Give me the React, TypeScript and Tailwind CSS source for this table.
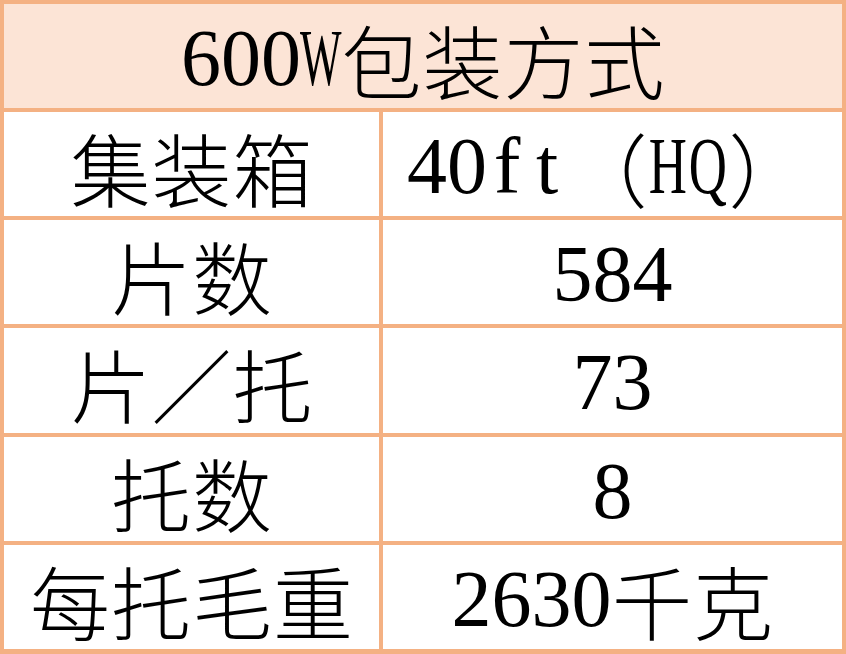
const half: Record<string, string> = {
  W: 'scale-x-[0.55]',
  H: 'scale-x-[0.66]',
  Q: 'scale-x-[0.66]',
};

// SimSun-like half-width Latin: every ASCII char sits in a 40px box
function Mixed({ text }: { text: string }) {
  return (
    <span className="inline-flex items-center">
      {text.split('').map((ch, i) =>
        ch.charCodeAt(0) < 128 ? (
          <span key={i} className="inline-flex justify-center w-[40px]">
            <span className={`inline-block shrink-0 ${half[ch] ?? ''}`}>{ch}</span>
          </span>
        ) : (
          <span key={i} className="inline-flex justify-center w-[81px] font-['Noto_Sans_CJK_SC',sans-serif] font-light">
            {ch}
          </span>
        ),
      )}
    </span>
  );
}

const rows: { label: string; value: string; left?: boolean }[] = [
  { label: '集装箱', value: '40ft（HQ）', left: true },
  { label: '片数', value: '584' },
  { label: '片／托', value: '73' },
  { label: '托数', value: '8' },
  { label: '每托毛重', value: '2630千克' },
];

export default function App() {
  return (
    <div className="w-[846px] h-[654px] bg-[#f4b183] pt-[4px] pb-[5px] px-[4px] grid grid-cols-[375px_459px] grid-rows-[104px_104px_104px_105px_104px_104px] gap-[4px] font-['Liberation_Serif','Noto_Sans_CJK_SC',serif] text-[80px] leading-none text-black">
      <div className="col-span-2 bg-[#fce4d6] flex items-center justify-center pt-[4px]">
        <Mixed text="600W包装方式" />
      </div>
      {rows.map((r) => (
        <div key={r.label} className="contents">
          <div className="bg-white flex items-center justify-center pt-[3px]">
            <Mixed text={r.label} />
          </div>
          <div
            className={`bg-white flex items-center pt-[3px] ${
              r.left ? 'justify-start pl-[24px]' : 'justify-center'
            }`}
          >
            <Mixed text={r.value} />
          </div>
        </div>
      ))}
    </div>
  );
}
